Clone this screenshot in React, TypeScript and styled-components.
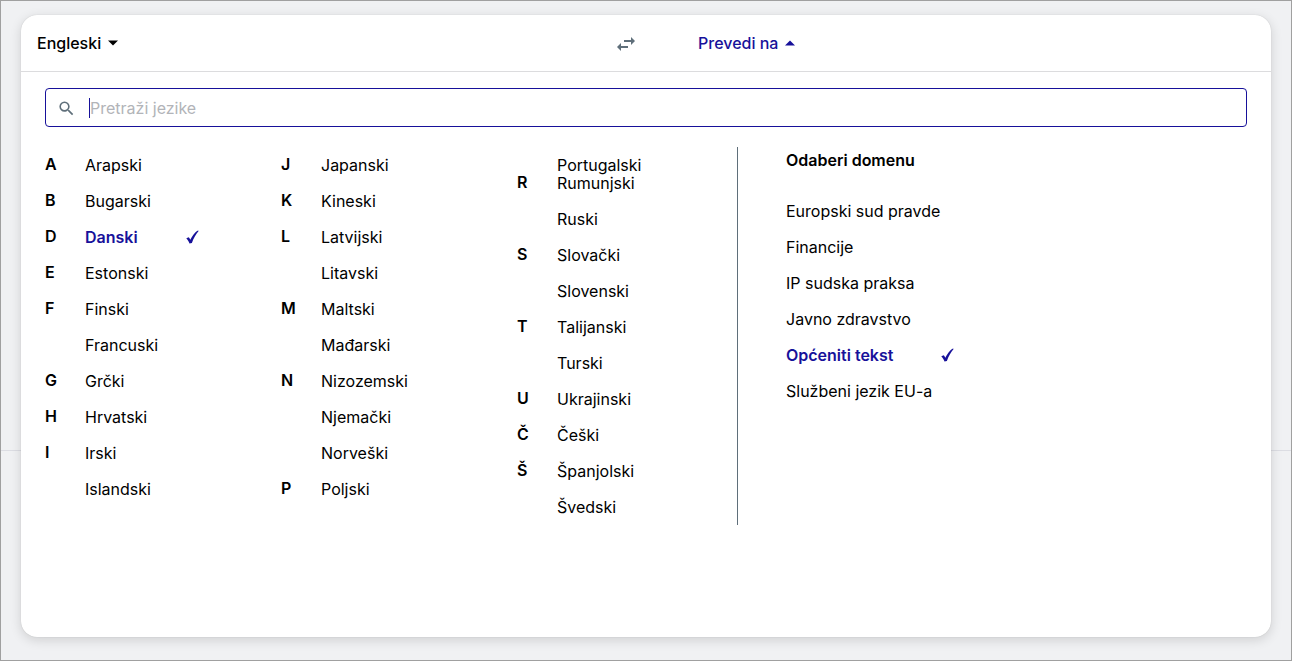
import React, { useState } from "react";
import styled, { createGlobalStyle, css } from "styled-components";

const navy = "#17119a";
const slate = "#5f6f7a";

const GlobalStyle = createGlobalStyle`
  *, *::before, *::after { box-sizing: border-box; }
  body {
    margin: 0;
    background: #f0f1f3;
    color: #000;
    font: 400 16px/18px Inter, "Liberation Sans", sans-serif;
  }
  button, input { font: inherit; color: inherit; }
`;

const Page = styled.div`
  min-height: 100vh;
  display: flex;
  padding: 14px 20px 23px;
  border: 1px solid #a0a0a0;
  background: linear-gradient(#dcdde3, #dcdde3) 0 449px / 100% 1px no-repeat #f0f1f3;
`;

const Card = styled.main`
  flex: 1;
  min-width: 0;
  background: #fff;
  border-radius: 16px;
  box-shadow: 0 0 1px rgba(0, 0, 0, 0.2), 0 3px 12px rgba(0, 0, 0, 0.14);
`;

const Header = styled.header`
  display: grid;
  grid-template-columns: 585fr 40px 625fr;
  align-items: center;
  height: 57px;
  border-bottom: 1px solid #dcdcde;
`;

const PlainButton = styled.button`
  display: inline-flex;
  align-items: center;
  border: 0;
  padding: 0;
  background: none;
  text-align: left;
  cursor: pointer;
`;

const LanguageButton = styled(PlainButton)<{ $active?: boolean }>`
  justify-self: start;
  gap: 7px;
  margin-left: ${(p) => (p.$active ? 52 : 16)}px;
  font-weight: 500;
  color: ${(p) => (p.$active ? navy : "#000")};
`;

const SwapButton = styled(PlainButton)`
  justify-content: center;
  padding-top: 1px;
  color: ${slate};
`;

const Body = styled.div`
  padding: 16px 24px;
`;

const SearchField = styled.label`
  display: flex;
  align-items: center;
  height: 39px;
  padding: 0 11px;
  border: 1px solid ${navy};
  border-radius: 4px;
  cursor: text;

  svg {
    flex: none;
    margin: 2px 13px 0 0;
    color: ${slate};
  }
`;

const Caret = styled.span`
  flex: none;
  width: 1px;
  height: 20px;
  background: ${navy};
`;

const SearchInput = styled.input`
  flex: 1;
  min-width: 0;
  border: 0;
  padding: 0;
  outline: 0;
  background: none;
  line-height: 20px;

  &::placeholder {
    color: #b2b4b8;
    opacity: 1;
  }
`;

const Panels = styled.div`
  display: grid;
  grid-template-columns: 693fr 509fr;
  margin-top: 20px;
`;

const Languages = styled.section`
  display: grid;
  grid-template-columns: repeat(3, 1fr);
  column-gap: 16px;
  align-items: start;
  border-right: 1px solid ${slate};
`;

const Group = styled.div`
  display: grid;
  grid-template-columns: 40px 1fr;
`;

const Letter = styled.h3<{ $flush?: boolean }>`
  margin: 0;
  padding-top: ${(p) => (p.$flush ? 0 : 9)}px;
  font-size: 16px;
  line-height: 16px;
  font-weight: 600;
`;

const List = styled.ul`
  margin: 0;
  padding: 0;
  list-style: none;
`;

const Option = styled(PlainButton)<{ $selected: boolean; $trim?: "top" | "bottom" }>`
  justify-content: space-between;
  width: ${(p) => (p.$selected ? "auto" : "100%")};
  padding: ${(p) => (p.$trim === "top" ? 0 : 9)}px 0 ${(p) => (p.$trim === "bottom" ? 0 : 9)}px;
  white-space: nowrap;
  ${(p) =>
    p.$selected &&
    css`
      gap: 48px;
      font-weight: 600;
      color: ${navy};
    `}
`;

const Item = styled.li`
  display: flex;
`;

const Domains = styled.section`
  padding: 4px 48px 0;
`;

const DomainTitle = styled.h2`
  margin: 0 0 24px;
  font-size: 16px;
  line-height: 18px;
  font-weight: 600;
`;

const CheckMark = () => (
  <svg width="14" height="14" viewBox="0 0 14 14" fill="currentColor" aria-hidden="true">
    <path d="M.3 8.300 2.800 7.200c.7 1 1.100 1.700 1.500 2.600C6 6.200 8.500 3 11.300.8h1.500C9.800 4.300 7.500 8.300 5.900 13L3.500 13.600C2.800 11.500 1.700 9.800.3 8.300Z" />
  </svg>
);

const Triangle = ({ up }: { up?: boolean }) => (
  <svg width="10" height="6" viewBox="0 0 10 6" fill="currentColor" aria-hidden="true">
    <path d={up ? "M0 5.500 5 .5l5 5Z" : "M0 .5h10l-5 5Z"} />
  </svg>
);

const SwapIcon = () => (
  <svg width="18" height="14" viewBox="0 0 18 14" fill="currentColor" aria-hidden="true">
    <path d="M4 6 0 10l4 4v-3h7V9H4V6ZM18 4l-4-4v3H7v2h7v3l4-4Z" />
  </svg>
);

const SearchIcon = () => (
  <svg width="19" height="19" viewBox="0 0 24 24" fill="currentColor" aria-hidden="true">
    <path d="M15.500 14h-.79l-.28-.27A6.471 6.471 0 0 0 16 9.500 6.500 6.500 0 1 0 9.500 16c1.610 0 3.090-.59 4.230-1.570l.27.28v.79l5 4.990L20.490 19l-4.990-5zm-6 0C7.010 14 5 11.990 5 9.500S7.010 5 9.500 5 14 7.010 14 9.500 11.990 14 9.500 14z" />
  </svg>
);

type LetterGroup = { letter: string; names: string[]; trim?: "top" | "bottom" };

const columns: LetterGroup[][] = [
  [
    { letter: "A", names: ["Arapski"] },
    { letter: "B", names: ["Bugarski"] },
    { letter: "D", names: ["Danski"] },
    { letter: "E", names: ["Estonski"] },
    { letter: "F", names: ["Finski", "Francuski"] },
    { letter: "G", names: ["Grčki"] },
    { letter: "H", names: ["Hrvatski"] },
    { letter: "I", names: ["Irski", "Islandski"] },
  ],
  [
    { letter: "J", names: ["Japanski"] },
    { letter: "K", names: ["Kineski"] },
    { letter: "L", names: ["Latvijski", "Litavski"] },
    { letter: "M", names: ["Maltski", "Mađarski"] },
    { letter: "N", names: ["Nizozemski", "Njemački", "Norveški"] },
    { letter: "P", names: ["Poljski"] },
  ],
  [
    { letter: "", names: ["Portugalski"], trim: "bottom" },
    { letter: "R", names: ["Rumunjski", "Ruski"], trim: "top" },
    { letter: "S", names: ["Slovački", "Slovenski"] },
    { letter: "T", names: ["Talijanski", "Turski"] },
    { letter: "U", names: ["Ukrajinski"] },
    { letter: "Č", names: ["Češki"] },
    { letter: "Š", names: ["Španjolski", "Švedski"] },
  ],
];

const domains = [
  "Europski sud pravde",
  "Financije",
  "IP sudska praksa",
  "Javno zdravstvo",
  "Općeniti tekst",
  "Službeni jezik EU-a",
];

export default function App() {
  const [language, setLanguage] = useState("Danski");
  const [domain, setDomain] = useState("Općeniti tekst");
  const [query, setQuery] = useState("");

  return (
    <>
      <GlobalStyle />
      <Page>
        <Card>
          <Header>
            <LanguageButton type="button">
              Engleski <Triangle />
            </LanguageButton>
            <SwapButton type="button" aria-label="Zamijeni jezike">
              <SwapIcon />
            </SwapButton>
            <LanguageButton type="button" $active aria-expanded="true">
              Prevedi na <Triangle up />
            </LanguageButton>
          </Header>
          <Body>
            <SearchField>
              <SearchIcon />
              {query === "" && <Caret />}
              <SearchInput
                type="text"
                aria-label="Pretraži jezike"
                placeholder="Pretraži jezike"
                value={query}
                onChange={(e) => setQuery(e.target.value)}
              />
            </SearchField>
            <Panels>
              <Languages>
                {columns.map((groups, c) => (
                  <div key={c}>
                    {groups.map((g) => (
                      <Group key={g.letter}>
                        {g.letter ? <Letter $flush={g.trim === "top"}>{g.letter}</Letter> : <span />}
                        <List>
                          {g.names.map((name, i) => (
                            <Item key={name}>
                              <Option
                                type="button"
                                $selected={name === language}
                                $trim={i === 0 ? g.trim : undefined}
                                onClick={() => setLanguage(name)}
                              >
                                {name}
                                {name === language && <CheckMark />}
                              </Option>
                            </Item>
                          ))}
                        </List>
                      </Group>
                    ))}
                  </div>
                ))}
              </Languages>
              <Domains>
                <DomainTitle>Odaberi domenu</DomainTitle>
                <List>
                  {domains.map((name) => (
                    <Item key={name}>
                      <Option type="button" $selected={name === domain} onClick={() => setDomain(name)}>
                        {name}
                        {name === domain && <CheckMark />}
                      </Option>
                    </Item>
                  ))}
                </List>
              </Domains>
            </Panels>
          </Body>
        </Card>
      </Page>
    </>
  );
}
